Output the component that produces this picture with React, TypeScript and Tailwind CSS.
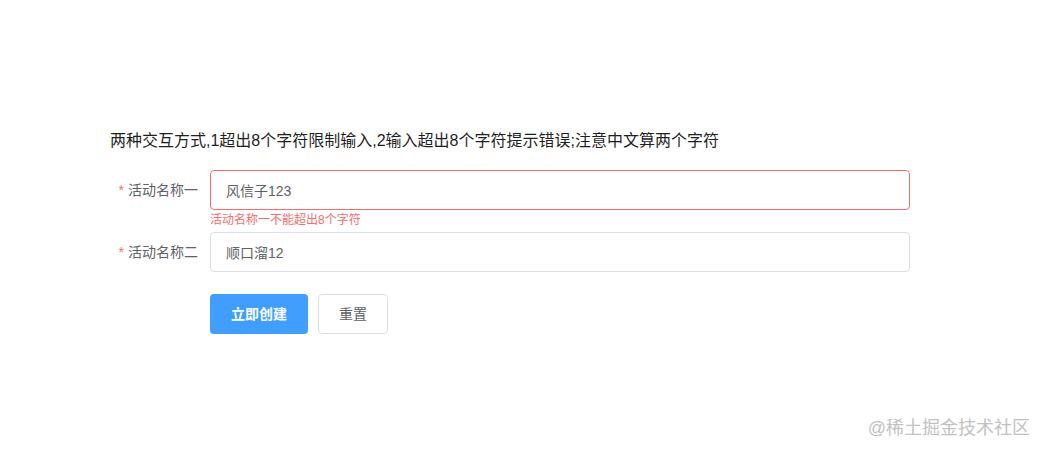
import React, { useState } from 'react';

const font = '"Liberation Sans", "Noto Sans CJK SC", sans-serif';

const App: React.FC = () => {
  const [name1, setName1] = useState('风信子123');
  const [name2, setName2] = useState('顺口溜12');

  return (
    <div className="relative w-[1045px] h-[454px] bg-white overflow-hidden" style={{ fontFamily: font }}>
      <div className="pt-[129px] pl-[110px] w-[910px]">
        <p className="text-[16px] leading-[24px] text-[#1f1f1f] mb-[17px]">
          两种交互方式,1超出8个字符限制输入,2输入超出8个字符提示错误;注意中文算两个字符
        </p>

        {/* 表单 */}
        <form className="w-[800px]">
          <div className="flex mb-[22px]">
            <label className="w-[100px] shrink-0 pr-[12px] text-right text-[14px] leading-[40px] text-[#606266]">
              <span className="text-[#f56c6c] mr-[4px]">*</span>活动名称一
            </label>
            <div className="relative flex-1">
              <input
                value={name1}
                onChange={(e) => setName1(e.target.value)}
                className="w-full h-[40px] px-[15px] rounded-[4px] border border-[#f56c6c] text-[14px] text-[#606266] outline-none"
              />
              <div className="absolute left-0 top-full pt-[4px] text-[12px] leading-none text-[#f56c6c]">
                活动名称一不能超出8个字符
              </div>
            </div>
          </div>

          <div className="flex mb-[22px]">
            <label className="w-[100px] shrink-0 pr-[12px] text-right text-[14px] leading-[40px] text-[#606266]">
              <span className="text-[#f56c6c] mr-[4px]">*</span>活动名称二
            </label>
            <div className="flex-1">
              <input
                value={name2}
                onChange={(e) => setName2(e.target.value)}
                className="w-full h-[40px] px-[15px] rounded-[4px] border border-[#dcdfe6] text-[14px] text-[#606266] outline-none"
              />
            </div>
          </div>

          <div className="flex pl-[100px] gap-[10px]">
            <button type="button" className="w-[98px] h-[40px] rounded-[4px] bg-[#409eff] text-white text-[14px] font-bold">
              立即创建
            </button>
            <button type="button" className="w-[70px] h-[40px] rounded-[4px] border border-[#dcdfe6] bg-white text-[#606266] text-[14px]">
              重置
            </button>
          </div>
        </form>
      </div>

      <div className="absolute right-[15px] top-[416px] text-[18px] leading-[24px] text-[#c2c2c2]">
        @稀土掘金技术社区
      </div>
    </div>
  );
};

export default App;
